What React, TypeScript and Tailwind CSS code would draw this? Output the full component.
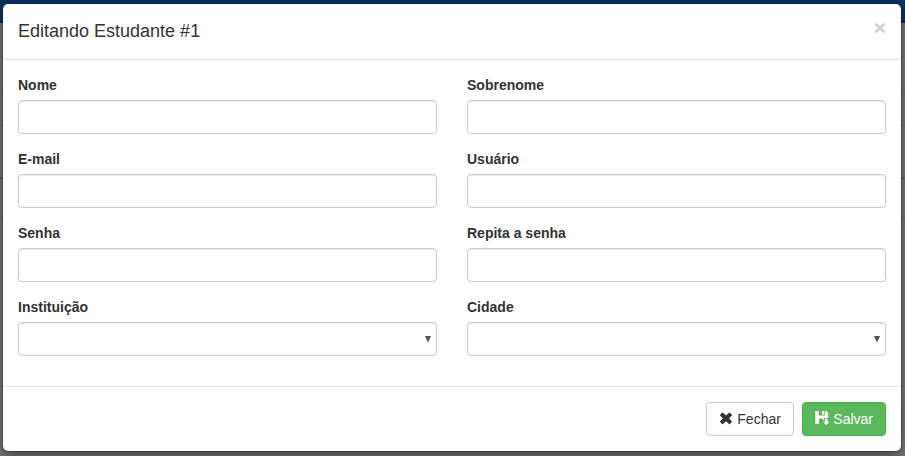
import React from "react";

const inputClass =
  "block h-[34px] w-full appearance-none rounded border border-[#ccc] bg-white px-3 py-1.5 text-sm text-[#555] shadow-[inset_0_1px_1px_rgba(0,0,0,0.075)] outline-none";

function Field({ label, select = false }: { label: string; select?: boolean }) {
  return (
    <label className="block">
      <span className="mb-[5px] block text-[14px] leading-5 font-bold">{label}</span>
      {select ? (
        <span className="relative block">
          <select className={inputClass} />
          <svg className="pointer-events-none absolute top-[14px] right-[6px] h-[6px] w-[6px]" viewBox="0 0 6 6">
            <path d="M0 0h6L3.3 6h-.6z" fill="#555" />
          </svg>
        </span>
      ) : (
        <input className={inputClass} />
      )}
    </label>
  );
}

function RemoveIcon() {
  return (
    <svg className="h-[14px] w-[14px]" viewBox="0 0 14 14" fill="currentColor">
      <path d="M4 .7 7 3.5 10 .7Q10.4.3 10.8.7L12.9 2.8Q13.3 3.2 12.9 3.6L10.1 6.4 12.9 9.2Q13.3 9.6 12.9 10L10.8 12.1Q10.4 12.5 10 12.1L7 9.3 4 12.1Q3.6 12.5 3.2 12.1L1.1 10Q.7 9.6 1.1 9.2L3.9 6.4 1.1 3.6Q.7 3.2 1.1 2.8L3.2.7Q3.6.3 4 .7Z" />
    </svg>
  );
}

function FloppySaveIcon() {
  return (
    <svg className="relative top-[-1px] h-[14px] w-[14px]" viewBox="0 0 14 14" fill="currentColor">
      <path d="M.3 0H3.7v4.4h6V0h1.5L13.3 2.1V7H9v1.8H7.5V7.4H4V13H.3zM7 0h2v3.4H7z" />
      <path d="M9.8 7.8h2.7v2.9H14.5L11.2 14 7.9 10.7H9.8z" />
    </svg>
  );
}

export default function App() {
  return (
    <div className="relative h-[456px] w-[905px] overflow-hidden bg-[#7f7f7f] font-['Liberation_Sans',Arial,sans-serif] text-sm text-[#333]">
      <div className="absolute inset-0 flex flex-col">
        <div className="h-[23px] border-b border-[#081f3c] bg-[#0d3361]" />
        <div className="h-[70px] border-b border-[#686868]" />
        <div className="h-[33px] border-b border-[#686868]" />
        <div className="h-[53px] border-b-2 border-[#686868]" />
        <div className="h-[39px] border-b border-[#686868]" />
      </div>
      <div className="relative mt-[3px] ml-[2px] w-[900px] rounded-md border border-black/20 bg-white bg-clip-padding shadow-[0_5px_15px_rgba(0,0,0,0.5)]">
        <header className="flex h-14 items-start justify-between border-b border-[#e5e5e5] p-[15px]">
          <h4 className="text-[18px] leading-[25px] font-medium">Editando Estudante #1</h4>
          <button className="mt-[-2px] text-[21px] leading-[21px] font-bold text-black opacity-20 [text-shadow:0_1px_0_#fff]">×</button>
        </header>
        <main className="grid grid-cols-2 gap-x-[30px] gap-y-[15px] px-[15px] pt-[15px] pb-[30px]">
          <Field label="Nome" />
          <Field label="Sobrenome" />
          <Field label="E-mail" />
          <Field label="Usuário" />
          <Field label="Senha" />
          <Field label="Repita a senha" />
          <Field label="Instituição" select />
          <Field label="Cidade" select />
        </main>
        <footer className="flex justify-end gap-2 border-t border-[#e5e5e5] p-[15px]">
          <button className="flex h-[34px] w-[88px] items-center justify-start gap-1 rounded border border-[#ccc] bg-white px-3 leading-5">
            <RemoveIcon />
            Fechar
          </button>
          <button className="flex h-[34px] items-center gap-1 rounded border border-[#4cae4c] bg-[#5cb85c] px-3 leading-5 text-white">
            <FloppySaveIcon />
            Salvar
          </button>
        </footer>
      </div>
    </div>
  );
}
